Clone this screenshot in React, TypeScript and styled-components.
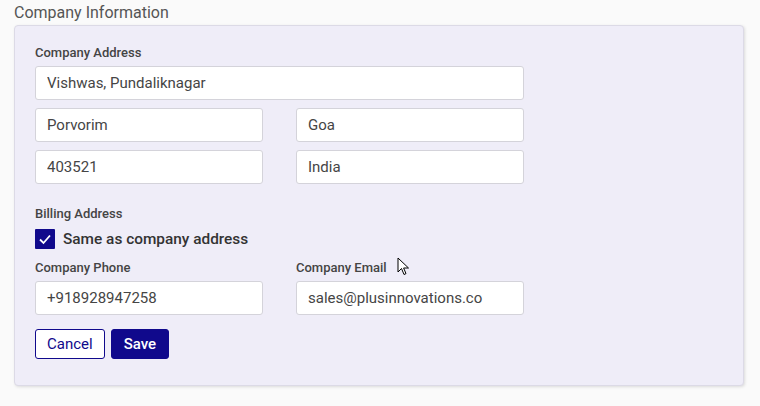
import React from "react";
import styled, { createGlobalStyle } from "styled-components";

const Global = createGlobalStyle`
  html, body { margin: 0; padding: 0; background: #fafafa; }
  body { font-family: Roboto, "Liberation Sans", sans-serif; }
  * { box-sizing: border-box; }
`;

const Page = styled.div`
  position: relative;
  width: 760px;
  height: 406px;
  padding: 3px 16px 0 14px;
`;

const Title = styled.div`
  font-size: 16px;
  line-height: 20px;
  color: #555;
  margin-bottom: 2px;
`;

const Card = styled.div`
  width: 730px;
  height: 361px;
  background: #efedf8;
  border: 1px solid #dcdae6;
  border-radius: 4px;
  box-shadow: 1px 1px 3px rgba(0, 0, 0, 0.12);
  padding: 19px 20px 0 20px;
  display: flex;
  flex-direction: column;
`;

const Label = styled.div`
  font-size: 13px;
  line-height: 16px;
  font-weight: 500;
  color: #444;
`;

const Field = styled.div`
  display: flex;
  flex-direction: column;
  gap: 5px;
`;

const Input = styled.input<{ $wide?: boolean }>`
  width: ${(p) => (p.$wide ? "489px" : "228px")};
  height: 34px;
  border: 1px solid #d4d3da;
  border-radius: 3px;
  background: #fff;
  padding: 0 11px;
  font-family: Roboto, "Liberation Sans", sans-serif;
  font-size: 15px;
  color: #454545;
  outline: none;
`;

const Stack = styled.div`
  display: flex;
  flex-direction: column;
  gap: 8px;
`;

const Row = styled.div`
  display: flex;
  gap: 33px;
`;

const Billing = styled.div`
  margin-top: 22px;
  display: flex;
  flex-direction: column;
  gap: 7px;
`;

const CheckRow = styled.label`
  display: flex;
  align-items: center;
  gap: 8px;
  font-size: 15.4px;
  font-weight: 500;
  color: #333;
  height: 20px;
`;

const Box = styled.span`
  width: 20px;
  height: 20px;
  background: #10098c;
  border-radius: 1px;
  display: flex;
  align-items: center;
  justify-content: center;
`;

const Contact = styled.div`
  margin-top: 11px;
  display: flex;
  gap: 33px;
`;

const Buttons = styled.div`
  margin-top: 14px;
  display: flex;
  gap: 6px;
`;

const Button = styled.button<{ $primary?: boolean }>`
  height: 30px;
  padding: 0 ${(p) => (p.$primary ? "12px" : "11px")};
  border-radius: 3px;
  border: 1px solid #10098c;
  background: ${(p) => (p.$primary ? "#10098c" : "#fff")};
  color: ${(p) => (p.$primary ? "#fff" : "#10098c")};
  font-family: Roboto, "Liberation Sans", sans-serif;
  font-size: 15px;
  font-weight: ${(p) => (p.$primary ? 500 : 400)};
`;

const Cursor = styled.svg`
  position: absolute;
  left: 397px;
  top: 257px;
`;

export default function App() {
  return (
    <Page>
      <Global />
      <Title>Company Information</Title>
      <Card>
        <Field>
          <Label>Company Address</Label>
          <Stack>
            <Input $wide defaultValue="Vishwas, Pundaliknagar" />
            <Row>
              <Input defaultValue="Porvorim" />
              <Input defaultValue="Goa" />
            </Row>
            <Row>
              <Input defaultValue="403521" />
              <Input defaultValue="India" />
            </Row>
          </Stack>
        </Field>
        <Billing>
          <Label>Billing Address</Label>
          <CheckRow>
            <Box>
              <svg width="14" height="14" viewBox="0 0 14 14">
                <path d="M2 7.5 L5.5 11 L12 3.5" fill="none" stroke="#fff" strokeWidth="1.8" />
              </svg>
            </Box>
            Same as company address
          </CheckRow>
        </Billing>
        <Contact>
          <Field>
            <Label>Company Phone</Label>
            <Input defaultValue="+918928947258" />
          </Field>
          <Field>
            <Label>Company Email</Label>
            <Input defaultValue="sales@plusinnovations.co" />
          </Field>
        </Contact>
        <Buttons>
          <Button>Cancel</Button>
          <Button $primary>Save</Button>
        </Buttons>
      </Card>
      <Cursor width="13" height="20" viewBox="0 0 13 20">
        <path d="M1 1 L1 15 L4.5 11.5 L7 17.5 L9 16.6 L6.6 11 L11.5 11 Z" fill="#fff" stroke="#000" strokeWidth="1" strokeLinejoin="round" />
      </Cursor>
    </Page>
  );
}
